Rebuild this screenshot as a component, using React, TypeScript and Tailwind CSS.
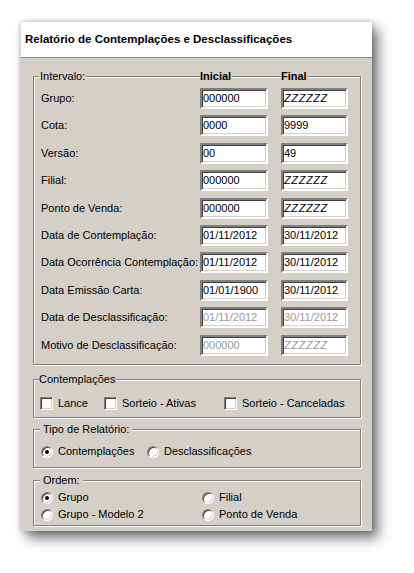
import React from "react";

const font = { fontFamily: '"Liberation Sans", Arial, sans-serif' };

function Field({ value, disabled, z }: { value: string; disabled?: boolean; z?: boolean }) {
  return (
    <div
      className={`h-[21px] bg-white border-2 border-t-[#808080] border-l-[#808080] border-b-white border-r-white shadow-[inset_1px_1px_0_#404040,inset_-1px_-1px_0_#d4d0c8] flex items-center pl-[1px] text-[11px] leading-none ${
        disabled ? "text-[#9a9a9a]" : "text-black"
      } ${z ? "italic tracking-[0.6px]" : ""}`}
    >
      {value}
    </div>
  );
}

function Row({ label, a, b, disabled, zb }: { label: string; a: string; b: string; disabled?: boolean; zb?: boolean }) {
  return (
    <div className="flex items-center h-[21px]">
      <div className="w-[159px] text-[11px] leading-[13px] text-black whitespace-nowrap">{label}</div>
      <div className="w-[68px]">
        <Field value={a} disabled={disabled} />
      </div>
      <div className="w-[13px]" />
      <div className="w-[67px]">
        <Field value={b} disabled={disabled} z={zb} />
      </div>
    </div>
  );
}

function Check({ label }: { label: string }) {
  return (
    <div className="flex items-center h-[13px]">
      <div className="w-[13px] h-[13px] bg-white border border-t-[#808080] border-l-[#808080] border-b-white border-r-white shadow-[inset_1px_1px_0_#404040,inset_-1px_-1px_0_#d4d0c8]" />
      <span className="ml-[5px] text-[11px] leading-[13px] text-black">{label}</span>
    </div>
  );
}

function Radio({ label, checked }: { label: string; checked?: boolean }) {
  return (
    <div className="flex items-center h-[13px]">
      <div className="w-[12px] h-[12px] rounded-full bg-white border border-t-[#808080] border-l-[#808080] border-b-white border-r-white shadow-[inset_1px_1px_0_#404040,inset_-1px_-1px_0_#d4d0c8] flex items-center justify-center">
        {checked && <div className="w-[4px] h-[4px] rounded-full bg-black" />}
      </div>
      <span className="ml-[5px] text-[11px] leading-[13px] text-black">{label}</span>
    </div>
  );
}

function Group({ children, className }: { children: React.ReactNode; className?: string }) {
  return (
    <div className={`relative border border-[#808080] shadow-[inset_1px_1px_0_#fff,1px_1px_0_#fff] ${className ?? ""}`}>
      {children}
    </div>
  );
}

export default function App() {
  return (
    <div className="w-[414px] h-[573px] bg-white pt-[22px] pl-[21px]" style={font}>
      <div className="w-[351px] h-[509px] bg-[#d4d0c8] shadow-[0_0_5px_rgba(0,0,0,0.25),6px_7px_12px_rgba(0,0,0,0.55)] flex flex-col">
        <div className="h-[36px] bg-white border-b border-[#8a8a8a] flex items-center pl-[4px]">
          <span className="text-[11.5px] font-bold text-black">Relatório de Contemplações e Desclassificações</span>
        </div>
        <div className="pl-[12px] pt-[18px]">
          <Group className="w-[328px] h-[289px] pl-[7px] pt-[11px]">
            <span className="absolute -top-[7px] left-[5px] bg-[#d4d0c8] pl-[1px] pr-[1px] text-[11px] leading-[13px] text-black">Intervalo:</span>
            <span className="absolute -top-[7px] left-[166px] bg-[#d4d0c8] pr-[1px] text-[11px] leading-[13px] font-bold text-black">Inicial</span>
            <span className="absolute -top-[7px] left-[247px] bg-[#d4d0c8] pr-[1px] text-[11px] leading-[13px] font-bold text-black">Final</span>
            <div className="flex flex-col gap-[6.4px]">
              <Row label="Grupo:" a="000000" b="ZZZZZZ" zb />
              <Row label="Cota:" a="0000" b="9999" />
              <Row label="Versão:" a="00" b="49" />
              <Row label="Filial:" a="000000" b="ZZZZZZ" zb />
              <Row label="Ponto de Venda:" a="000000" b="ZZZZZZ" zb />
              <Row label="Data de Contemplação:" a="01/11/2012" b="30/11/2012" />
              <Row label="Data Ocorrência Contemplação:" a="01/11/2012" b="30/11/2012" />
              <Row label="Data Emissão Carta:" a="01/01/1900" b="30/11/2012" />
              <Row label="Data de Desclassificação:" a="01/11/2012" b="30/11/2012" disabled />
              <Row label="Motivo de Desclassificação:" a="000000" b="ZZZZZZ" disabled zb />
            </div>
          </Group>
          <Group className="w-[328px] h-[39px] mt-[14px] pl-[6px] pt-[17px]">
            <span className="absolute -top-[7px] left-[5px] bg-[#d4d0c8] pr-[1px] text-[11px] leading-[13px] text-black">Contemplações</span>
            <div className="flex items-center">
              <div className="w-[64px]"><Check label="Lance" /></div>
              <div className="w-[120px]"><Check label="Sorteio - Ativas" /></div>
              <Check label="Sorteio - Canceladas" />
            </div>
          </Group>
          <Group className="w-[328px] h-[39px] mt-[11px] pl-[7px] pt-[15px]">
            <span className="absolute -top-[7px] left-[6px] bg-[#d4d0c8] px-[3px] text-[11px] leading-[13px] text-black">Tipo de Relatório:</span>
            <div className="flex items-center">
              <div className="w-[106px]"><Radio label="Contemplações" checked /></div>
              <Radio label="Desclassificações" />
            </div>
          </Group>
          <Group className="w-[328px] h-[46px] mt-[12px] pl-[7px] pt-[10px]">
            <span className="absolute -top-[7px] left-[6px] bg-[#d4d0c8] px-[3px] text-[11px] leading-[13px] text-black">Ordem:</span>
            <div className="grid grid-cols-[161px_1fr] gap-y-[4px]">
              <Radio label="Grupo" checked />
              <Radio label="Filial" />
              <Radio label="Grupo - Modelo 2" />
              <Radio label="Ponto de Venda" />
            </div>
          </Group>
        </div>
      </div>
    </div>
  );
}
